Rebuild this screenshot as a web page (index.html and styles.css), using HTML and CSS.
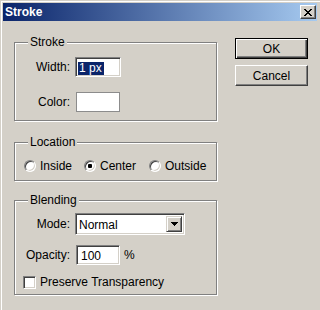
FILE: index.html
```html
<!DOCTYPE html>
<html>
<head>
<meta charset="utf-8">
<link rel="stylesheet" href="styles.css">
</head>
<body>
<div class="window">
  <div class="titlebar">
    <span class="title">Stroke</span>
    <div class="close">
      <svg width="8" height="7" viewBox="0 0 8 7"><path fill="#000" d="M0 0h2v1h-2z M6 0h2v1h-2z M1 1h2v1h-2z M5 1h2v1h-2z M2 2h4v1h-4z M3 3h2v1h-2z M2 4h4v1h-4z M1 5h2v1h-2z M5 5h2v1h-2z M0 6h2v1h-2z M6 6h2v1h-2z"/></svg>
    </div>
  </div>
  <div class="content">
    <div class="groups">
      <fieldset class="group">
        <legend>Stroke</legend>
        <div class="form stroke-form">
          <span class="label">Width:</span>
          <div class="field width-field"><span class="sel">1 px</span></div>
          <span class="label">Color:</span>
          <div class="swatch"></div>
        </div>
      </fieldset>
      <fieldset class="group location">
        <legend>Location</legend>
        <div class="radios">
          <div class="option"><span class="radio"></span>Inside</div>
          <div class="option"><span class="radio checked"></span>Center</div>
          <div class="option"><span class="radio"></span>Outside</div>
        </div>
      </fieldset>
      <fieldset class="group blending">
        <legend>Blending</legend>
        <div class="form blend-form">
          <span class="label">Mode:</span>
          <div class="field select">
            <span class="value">Normal</span>
            <span class="drop"><svg width="7" height="4" viewBox="0 0 7 4"><path fill="#000" d="M0 0h7v1h-7z M1 1h5v1h-5z M2 2h3v1h-3z M3 3h1v1h-1z"/></svg></span>
          </div>
          <span class="label">Opacity:</span>
          <div class="opacity"><div class="field opacity-field">100</div><span>%</span></div>
          <div class="check-row"><span class="field checkbox"></span>Preserve Transparency</div>
        </div>
      </fieldset>
    </div>
    <div class="buttons">
      <div class="btn default">OK</div>
      <div class="btn">Cancel</div>
    </div>
  </div>
</div>
</body>
</html>
```
FILE: styles.css
```css
* { box-sizing: border-box; }
html, body { margin: 0; padding: 0; }
body {
  width: 320px;
  height: 310px;
  overflow: hidden;
  font: 12px/14px "Liberation Sans", Arial, sans-serif;
  color: #000;
  background: #D4D0C8;
}
.window {
  width: 320px;
  height: 310px;
  background: #D4D0C8;
  padding: 3px;
  box-shadow: inset 1px 1px 0 #D4D0C8, inset 2px 2px 0 #fff;
}
.titlebar {
  display: flex;
  align-items: center;
  height: 18px;
  padding: 0 1px 0 2px;
  background: linear-gradient(to right, #0A246A, #A6CAF0);
}
.title {
  flex: 1;
  color: #fff;
  font-weight: bold;
  line-height: 18px;
}
.close {
  width: 16px;
  height: 14px;
  display: flex;
  align-items: center;
  justify-content: center;
  background: #D4D0C8;
  border: 1px solid;
  border-color: #fff #404040 #404040 #fff;
  box-shadow: inset -1px -1px 0 #808080;
}
.close svg { display: block; margin-top: 0; margin-left: -1px; }
.content {
  display: flex;
  align-items: flex-start;
  padding: 14px 0 0 11px;
}
.groups {
  width: 203px;
  display: flex;
  flex-direction: column;
}
.group {
  margin: 0;
  padding: 0;
  min-width: 0;
  border: 1px solid #808080;
  box-shadow: inset 1px 1px 0 #fff, 1px 1px 0 #fff;
}
.group legend {
  margin-left: 13px;
  padding: 0 2px;
  line-height: 14px;
  background: #D4D0C8;
}
.location { margin-top: 14px; }
.blending { margin-top: 12px; }
.form {
  display: grid;
  grid-template-columns: 55px auto;
  column-gap: 5px;
  align-items: center;
  justify-items: start;
}
.form .label { justify-self: end; }
.stroke-form { row-gap: 15px; padding: 8px 0 8px 0; }
.blend-form { row-gap: 10px; padding: 6px 0 5px 0; }
.field {
  background: #fff;
  border: 1px solid;
  border-color: #808080 #fff #fff #808080;
  box-shadow: inset 1px 1px 0 #404040, inset -1px -1px 0 #D4D0C8;
}
.width-field {
  width: 46px;
  height: 20px;
  padding: 3px 0 0 2px;
}
.sel {
  display: inline-block;
  background: #0A246A;
  color: #fff;
  padding: 0 2px 0 1px;
  line-height: 13px;
}
.swatch {
  width: 44px;
  height: 20px;
  margin-left: 1px;
  background: #fff;
  border: 1px solid #8c8c8c;
}
.radios {
  display: grid;
  grid-template-columns: 60px 65px auto;
  padding: 10px 0 7px 9px;
}
.option {
  display: flex;
  align-items: center;
  gap: 4px;
  height: 14px;
}
.radio {
  width: 12px;
  height: 12px;
  flex: none;
  border-radius: 50%;
  background: #fff;
  border: 1px solid;
  border-color: #808080 #fff #fff #808080;
  box-shadow: inset 1px 1px 0 #404040, inset -1px -1px 0 #D4D0C8;
  display: flex;
  align-items: center;
  justify-content: center;
}
.radio.checked::after {
  content: "";
  width: 4px;
  height: 4px;
  border-radius: 1px;
  background: #000;
}
.select {
  width: 110px;
  height: 22px;
  display: flex;
  align-items: stretch;
  padding: 2px;
}
.select .value {
  flex: 1;
  padding-left: 1px;
  line-height: 18px;
}
.drop {
  width: 16px;
  display: flex;
  align-items: center;
  justify-content: center;
  background: #D4D0C8;
  border: 1px solid;
  border-color: #D4D0C8 #404040 #404040 #D4D0C8;
  box-shadow: inset 1px 1px 0 #fff, inset -1px -1px 0 #808080;
}
.drop svg { display: block; }
.opacity {
  display: flex;
  align-items: center;
  gap: 4px;
}
.opacity-field {
  width: 44px;
  height: 20px;
  margin-left: 1px;
  padding: 3px 0 0 4px;
  line-height: 14px;
}
.check-row {
  grid-column: 1 / 3;
  display: flex;
  align-items: center;
  gap: 4px;
  height: 14px;
  padding-left: 8px;
}
.checkbox {
  width: 13px;
  height: 13px;
  flex: none;
}
.buttons {
  margin-left: 18px;
  margin-top: 3px;
  display: flex;
  flex-direction: column;
  gap: 6px;
}
.btn {
  width: 73px;
  height: 21px;
  display: flex;
  align-items: center;
  justify-content: center;
  background: #D4D0C8;
  border: 1px solid;
  border-color: #fff #404040 #404040 #fff;
  box-shadow: inset -1px -1px 0 #808080;
}
.btn.default {
  border: 1px solid #000;
  box-shadow: inset 1px 1px 0 #fff, inset -1px -1px 0 #404040, inset -2px -2px 0 #808080;
}
```
